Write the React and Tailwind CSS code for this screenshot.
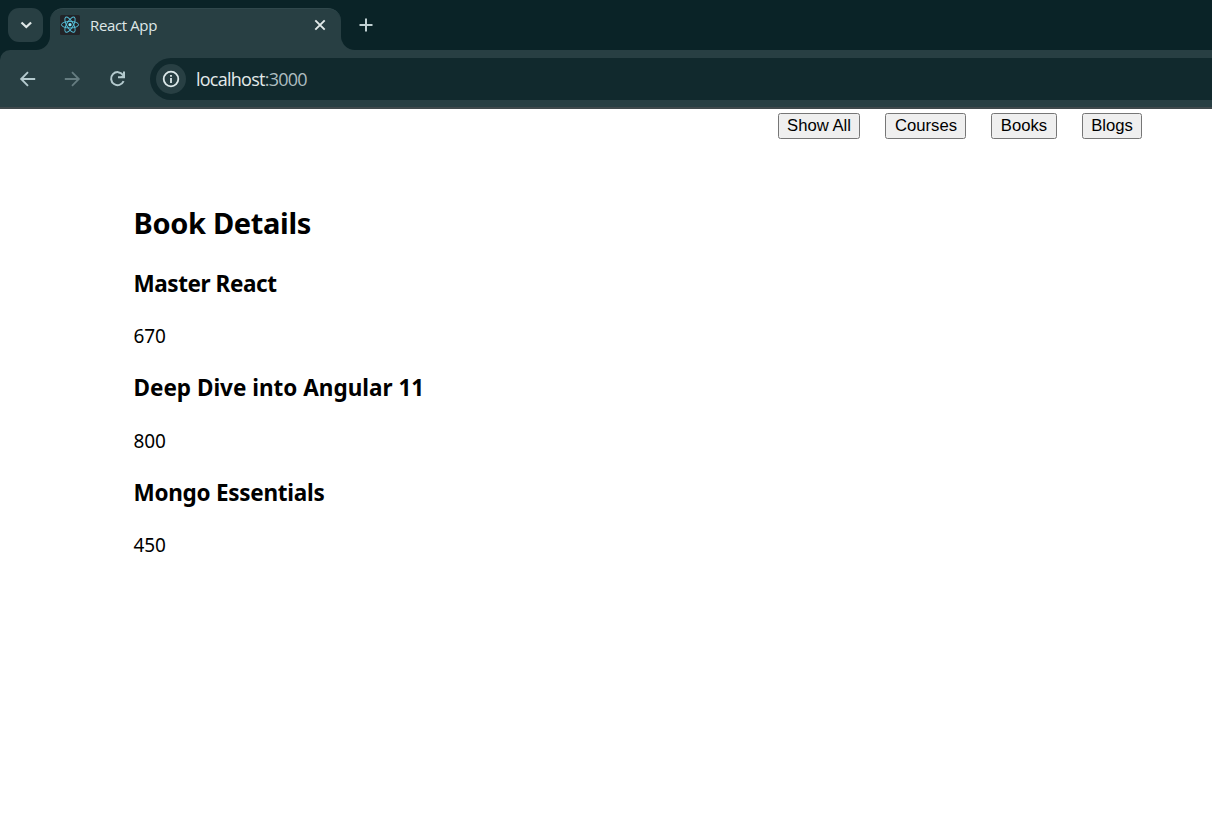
const books = [
  { name: 'Master React', price: 670, tracking: 'tracking-[-0.43px]' },
  { name: 'Deep Dive into Angular 11', price: 800, tracking: 'tracking-[0px]' },
  { name: 'Mongo Essentials', price: 450, tracking: 'tracking-[-0.27px]' },
];

function ReactLogo() {
  return (
    <svg width="20" height="20" viewBox="0 0 20 20" fill="none" stroke="#55bfd9" strokeWidth="0.95">
      <rect width="20" height="20" rx="1.5" fill="#222428" stroke="none" />
      <ellipse cx="10" cy="9.7" rx="8.6" ry="3.3" />
      <ellipse cx="10" cy="9.7" rx="8.6" ry="3.3" transform="rotate(60 10 9.7)" />
      <ellipse cx="10" cy="9.7" rx="8.6" ry="3.3" transform="rotate(120 10 9.7)" />
      <circle cx="10" cy="9.7" r="1.6" fill="#7fe4fb" stroke="none" />
    </svg>
  );
}

function Stroke({ d, size = 20, width = 2, className }) {
  return (
    <svg width={size} height={size} viewBox="0 0 20 20" fill="none" stroke="currentColor" strokeWidth={width} className={className}>
      <path d={d} />
    </svg>
  );
}

function TabStrip() {
  return (
    <div className="flex h-[50px] items-start bg-[#0a2327] pl-2 pt-2">
      <button className="relative z-10 flex h-[34px] w-[35px] items-center justify-center rounded-[11px] bg-[#283f43] text-[#dfe8e8]">
        <Stroke d="M5.5 7.5 L10.3 12.1 L15.1 7.5" width={2.2} />
      </button>
      <div className="relative ml-[7px] flex h-[42px] w-[291px] items-center rounded-t-[13px] border-t border-[#30484c] bg-[#283f43] pl-[10px] pb-[9px]">
        <div className="absolute -left-[14px] bottom-0 h-[14px] w-[14px] bg-[#283f43]">
          <div className="h-full w-full rounded-br-[14px] bg-[#0a2327]" />
        </div>
        <div className="absolute -right-[14px] bottom-0 h-[14px] w-[14px] bg-[#283f43]">
          <div className="h-full w-full rounded-bl-[14px] bg-[#0a2327]" />
        </div>
        <ReactLogo />
        <span className="ml-[10px] w-[220px] font-['Open_Sans','Noto_Sans',sans-serif] text-[15px] leading-5 tracking-[-0.37px] text-[#dfe7e7]">React App</span>
        <Stroke d="M5.3 5.3 L14.7 14.7 M14.7 5.3 L5.3 14.7" width={1.9} className="shrink-0 text-[#e2eaea]" />
      </div>
      <Stroke d="M10 3.5 V16.5 M3.5 10 H16.5" width={2} className="ml-[15px] mt-[7px] text-[#c0d0d2]" />
    </div>
  );
}

function Toolbar() {
  return (
    <div className="bg-[#0a2327]">
      <div className="flex h-[59px] items-start rounded-tl-[10px] border-b-2 border-[#40494c] bg-[#283f43] pt-2">
        <div className="flex h-[42px] w-[150px] items-center gap-[25px] pb-px pl-[18px] text-[#b4cace]">
          <Stroke d="M17.2 10 H3.5 M10 3.2 L3.2 10 L10 16.8" width={1.9} />
          <Stroke d="M1.8 10 H15.5 M9 3.2 L15.8 10 L9 16.8" width={1.8} className="text-[#657c80]" />
          <svg width="20" height="20" viewBox="0 0 20 20" fill="none" stroke="currentColor" strokeWidth="2">
            <path d="M14.9 5.8 A6.5 6.5 0 1 0 15.6 12.2" />
            <path d="M16 2.6 V8.2 H10" />
            <path d="M16 4.5 V8.2 H12.3 Z" fill="currentColor" stroke="none" />
          </svg>
        </div>
        <div className="flex h-[42px] flex-1 items-center rounded-l-[21px] bg-[#11292d] pl-[6px]">
          <div className="flex h-[30px] w-[30px] items-center justify-center rounded-full bg-[#283f43] text-[#dce8e9]">
            <svg width="18" height="18" viewBox="0 0 18 18" fill="none" stroke="currentColor" strokeWidth="1.8">
              <circle cx="9" cy="9" r="7.3" />
              <path d="M9 8 V13 M9 5 V6.8" />
            </svg>
          </div>
          <span className="ml-[10px] font-['Open_Sans','Noto_Sans',sans-serif] text-[18px] leading-6 tracking-[-0.75px] text-[#e3eaea]">
            localhost<span className="text-[#aebdc0]">:3000</span>
          </span>
        </div>
      </div>
    </div>
  );
}

function NavButton({ className, children }) {
  return (
    <button className={`flex h-[26px] items-center justify-center rounded-[2.5px] border border-[#767676] bg-[#efefef] pb-px font-['Liberation_Sans',Arial,sans-serif] text-[16.67px] leading-5 text-black ${className}`}>
      {children}
    </button>
  );
}

export default function App() {
  return (
    <div className="flex h-[838px] w-[1212px] flex-col overflow-hidden bg-white">
      <TabStrip />
      <Toolbar />
      <nav className="mt-1 flex justify-end gap-[25px] pr-[70px]">
        <NavButton className="w-[82px]">Show All</NavButton>
        <NavButton className="w-[81px] pl-px">Courses</NavButton>
        <NavButton className="w-[66px]">Books</NavButton>
        <NavButton className="w-[60px]">Blogs</NavButton>
      </nav>
      <main className="ml-[133.5px] mt-[64px] font-['Noto_Sans','Open_Sans',sans-serif] text-black">
        <h2 className="h-10 text-[29px] font-bold leading-10 tracking-[-0.33px]">Book Details</h2>
        <div className="mt-[24.5px]">
          {books.map((book) => (
            <section key={book.name} className="h-[104.5px]">
              <h3 className={`h-8 text-[22.5px] font-bold leading-8 ${book.tracking}`}>{book.name}</h3>
              <p className="mt-[22.5px] text-[19px] leading-7 tracking-[-0.1px]">{book.price}</p>
            </section>
          ))}
        </div>
      </main>
    </div>
  );
}
